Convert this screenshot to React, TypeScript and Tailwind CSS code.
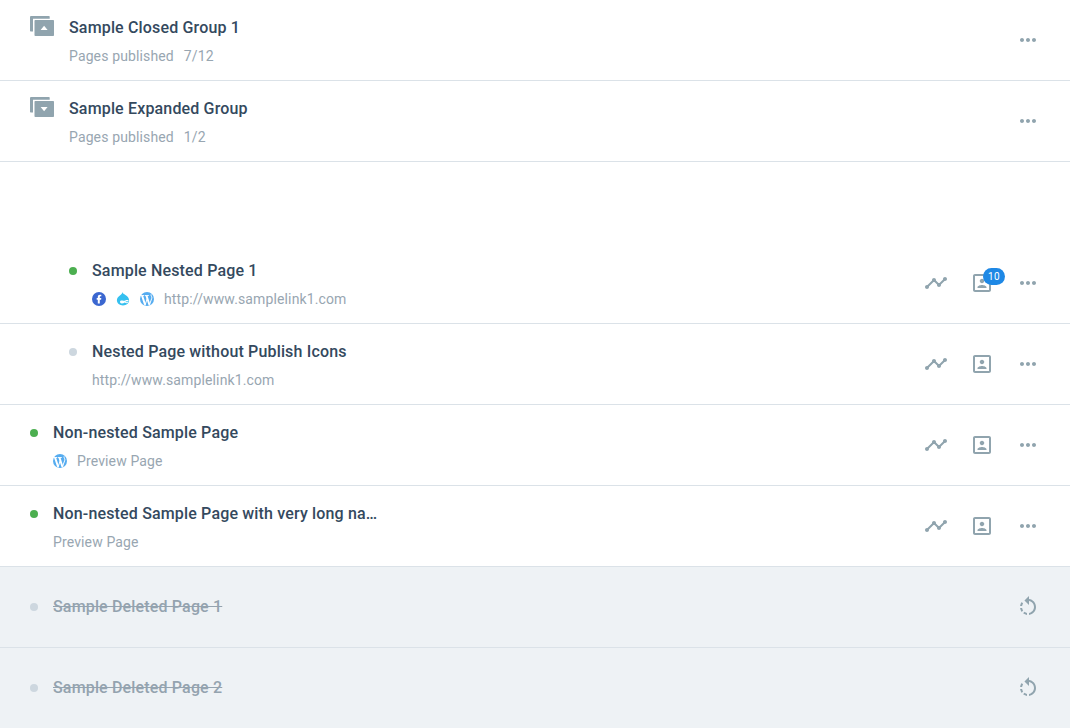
import type { ReactNode } from "react";
import { MdTimeline, MdPortrait, MdMoreHoriz, MdRotateLeft } from "react-icons/md";

function GroupIcon({ expanded }: { expanded?: boolean }) {
  return (
    <svg width="24" height="20" viewBox="0 0 24 20" fill="#90a4ae" className="mt-4 shrink-0">
      <path d="M1 0H19Q19.7 0 19.7 .7V2.8H3V15.5H.7Q0 15.5 0 14.8V1Q0 0 1 0Z" />
      <path
        fillRule="evenodd"
        d={
          expanded
            ? "M5.3 4H23.2Q24 4 24 4.8V19.2Q24 20 23.2 20H5.3Q4.5 20 4.5 19.2V4.8Q4.5 4 5.3 4ZM10.6 10H17.6L14.1 14.2Z"
            : "M5.3 4H23.2Q24 4 24 4.8V19.2Q24 20 23.2 20H5.3Q4.5 20 4.5 19.2V4.8Q4.5 4 5.3 4ZM10.6 14H17.6L14.1 9.8Z"
        }
      />
    </svg>
  );
}

function FacebookIcon() {
  return (
    <svg width="14" height="14" viewBox="0 0 14 14">
      <circle cx="7" cy="7" r="7" fill="#3b67d0" />
      <path
        fill="#fff"
        d="M5.8 11.4V7.7H4.7V6H5.8V5C5.8 3.5 6.7 2.7 8 2.7H9.3V4.3H8.5C8 4.3 7.8 4.5 7.8 5V6H9.3L9.1 7.7H7.8V11.4Z"
      />
    </svg>
  );
}

function DrupalIcon() {
  return (
    <svg width="14" height="14" viewBox="0 0 14 14">
      <path
        fill="#35c0f0"
        d="M6.2 0C6.7 1.5 8.1 1.9 9.4 2.9C11.5 4.2 13.1 5.9 13.1 8.3C13.1 11.3 10.4 13.4 7 13.4S.9 11.3 .9 8.3C.9 6.1 2.2 4.5 3.9 3.4C5.2 2.5 6.3 1.8 6.2 0Z"
      />
      <path
        fill="#fff"
        d="M4 9.8C4 8.5 5.6 8 7.3 8.7C8.6 9.1 9.5 8 11 8C12 8 12.6 8.3 12.8 9L12 9.4C11 9 9.8 9.1 9.4 9.7C10 10.3 11 10.3 11.8 9.9L12.2 10.7C11.2 11.4 9.9 11.3 8.8 10.5C7.8 11.1 6.9 11.5 5.8 11.5C4.7 11.5 4 10.9 4 9.8Z"
      />
    </svg>
  );
}

function WordpressIcon() {
  return (
    <svg width="14" height="14" viewBox="0 0 14 14">
      <circle cx="7" cy="7" r="7" fill="#55acf0" />
      <g fill="none" stroke="#fff">
        <path strokeWidth="2" d="M2.1 3.7L5.1 12.8M6.5 3.7L9.4 12.8" />
        <path strokeWidth="1" d="M4.9 13.7L7.5 5.6M9.2 13.7L11.8 6.2C12.2 4.7 10.8 4 11.1 2.4" />
        <path strokeWidth=".9" d="M.5 3.5H4.3M5 3.5H8.8" />
      </g>
    </svg>
  );
}

function More() {
  return <MdMoreHoriz size={24} />;
}

function Actions({ badge }: { badge?: string }) {
  return (
    <div className="mt-7 flex h-6 gap-[22px] text-[#90a4ae]">
      <MdTimeline size={24} />
      <div className="relative h-6 w-6">
        <MdPortrait size={24} />
        {badge && (
          <span className="absolute -top-[3px] left-[13px] flex h-[17px] w-[22px] items-center justify-center rounded-full bg-[#1e88e5] text-[10px] leading-none tracking-[0.3px] text-white">
            {badge}
          </span>
        )}
      </div>
      <More />
    </div>
  );
}

function Dot({ color }: { color: string }) {
  return <span className={`h-2 w-2 shrink-0 rounded-full ${color}`} />;
}

const rowClass = "flex h-[81px] justify-between border-b border-[#dbe2e8] px-[30px]";
const titleClass = "whitespace-nowrap text-[16px] font-medium leading-6 tracking-[0.16px] text-[#34495e]";
const subClass = "mt-[6px] flex h-5 items-center text-[14px] leading-5 tracking-[0.13px] text-[#98a6b1]";

function GroupRow({ title, count, expanded }: { title: string; count: string; expanded?: boolean }) {
  return (
    <div className={rowClass}>
      <div className="flex">
        <GroupIcon expanded={expanded} />
        <div className="ml-[15px] pt-4">
          <div className={titleClass}>{title}</div>
          <div className={subClass}>
            <span>Pages published</span>
            <span className="ml-[10px]">{count}</span>
          </div>
        </div>
      </div>
      <div className="mt-7 text-[#90a4ae]">
        <More />
      </div>
    </div>
  );
}

interface PageRowProps {
  title: string;
  link: string;
  dot: string;
  nested?: boolean;
  badge?: string;
  icons?: ReactNode;
}

function PageRow({ title, link, dot, nested, badge, icons }: PageRowProps) {
  return (
    <div className={rowClass}>
      <div className={nested ? "flex pl-[39px]" : "flex"}>
        <div className="flex pt-6">
          <Dot color={dot} />
        </div>
        <div className="ml-[15px] pt-4">
          <div className={titleClass}>{title}</div>
          <div className={subClass}>
            {icons && <div className="mr-[10px] flex gap-[10px]">{icons}</div>}
            <span>{link}</span>
          </div>
        </div>
      </div>
      <Actions badge={badge} />
    </div>
  );
}

function DeletedRow({ title }: { title: string }) {
  return (
    <div className="flex h-[81px] items-center justify-between border-b border-[#dbe2e8] bg-[#eef2f5] px-[30px]">
      <div className="flex items-center gap-[15px]">
        <Dot color="bg-[#cdd7df]" />
        <span className="text-[16px] font-medium leading-6 tracking-[0.16px] text-[#94a3af] line-through">
          {title}
        </span>
      </div>
      <MdRotateLeft size={24} color="#90a4ae" />
    </div>
  );
}

export default function App() {
  return (
    <div className="h-[728px] overflow-hidden bg-white font-['Roboto',sans-serif]">
      <GroupRow title="Sample Closed Group 1" count="7/12" />
      <GroupRow title="Sample Expanded Group" count="1/2" expanded />
      <div className="h-[81px]" />
      <PageRow
        nested
        title="Sample Nested Page 1"
        link="http://www.samplelink1.com"
        dot="bg-[#4caf50]"
        badge="10"
        icons={
          <>
            <FacebookIcon />
            <DrupalIcon />
            <WordpressIcon />
          </>
        }
      />
      <PageRow
        nested
        title="Nested Page without Publish Icons"
        link="http://www.samplelink1.com"
        dot="bg-[#cdd7df]"
      />
      <PageRow title="Non-nested Sample Page" link="Preview Page" dot="bg-[#4caf50]" icons={<WordpressIcon />} />
      <PageRow title="Non-nested Sample Page with very long na…" link="Preview Page" dot="bg-[#4caf50]" />
      <DeletedRow title="Sample Deleted Page 1" />
      <DeletedRow title="Sample Deleted Page 2" />
    </div>
  );
}
